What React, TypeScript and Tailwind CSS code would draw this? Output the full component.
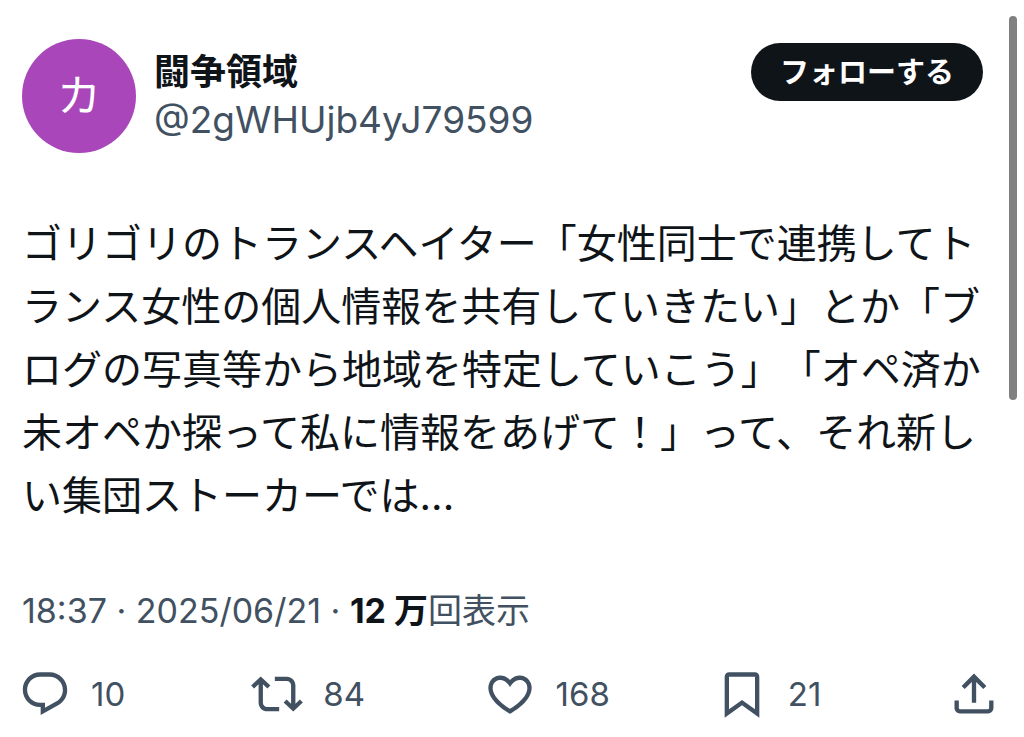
import React from 'react';

interface IconProps {
  path: string;
}

interface Stat {
  id: string;
  label: string;
  count?: string;
  path: string;
}

const author = {
  name: '闘争領域',
  handle: '@2gWHUjb4yJ79599',
  initial: 'カ'
};

const body =
  'ゴリゴリのトランスヘイター「女性同士で連携してトランス女性の個人情報を共有していきたい」とか「ブログの写真等から地域を特定していこう」「オペ済か未オペか探って私に情報をあげて！」って、それ新しい集団ストーカーでは...';

const stats: Stat[] = [
  {
    id: 'reply',
    label: '返信',
    count: '10',
    path: 'M1.751 10c0-4.42 3.584-8 8.005-8h4.366c4.49 0 8.129 3.64 8.129 8.13 0 2.96-1.607 5.68-4.196 7.11l-8.054 4.46v-3.69h-.067c-4.49.1-8.183-3.51-8.183-8.01zm8.005-6c-3.317 0-6.005 2.69-6.005 6 0 3.37 2.77 6.08 6.138 6.01l.351-.01h1.761v2.3l5.087-2.81c1.951-1.08 3.163-3.13 3.163-5.36 0-3.39-2.744-6.13-6.129-6.13H9.756z'
  },
  {
    id: 'repost',
    label: 'リポスト',
    count: '84',
    path: 'M4.5 3.88l4.432 4.14-1.364 1.46L5.5 7.55V16c0 1.1.896 2 2 2H13v2H7.5c-2.209 0-4-1.79-4-4V7.55L1.432 9.48.068 8.02 4.5 3.88zM16.5 6H11V4h5.5c2.209 0 4 1.79 4 4v8.45l2.068-1.93 1.364 1.46-4.432 4.14-4.432-4.14 1.364-1.46 2.068 1.93V8c0-1.1-.896-2-2-2z'
  },
  {
    id: 'like',
    label: 'いいね',
    count: '168',
    path: 'M16.697 5.5c-1.222-.06-2.679.51-3.89 2.16l-.805 1.09-.806-1.09C9.984 6.01 8.526 5.44 7.304 5.5c-1.243.07-2.349.78-2.91 1.91-.552 1.12-.633 2.78.479 4.82 1.074 1.97 3.257 4.27 7.129 6.61 3.87-2.34 6.052-4.64 7.126-6.61 1.111-2.04 1.03-3.7.477-4.82-.561-1.13-1.666-1.84-2.908-1.91zm4.187 7.69c-1.351 2.48-4.001 5.12-8.379 7.67l-.503.3-.504-.3c-4.379-2.55-7.029-5.19-8.382-7.67-1.36-2.5-1.41-4.86-.514-6.67.887-1.79 2.647-2.91 4.601-3.01 1.651-.09 3.368.56 4.798 2.01 1.429-1.45 3.146-2.1 4.796-2.01 1.954.1 3.714 1.22 4.601 3.01.896 1.81.846 4.17-.514 6.67z'
  },
  {
    id: 'bookmark',
    label: 'ブックマーク',
    count: '21',
    path: 'M4 4C4 2.9 4.9 2 6 2h12c1.1 0 2 .9 2 2v18.94l-8-5.71-8 5.71V4zM6 4v15.06l6-4.29 6 4.29V4H6z'
  },
  {
    id: 'share',
    label: '共有',
    path: 'M12 2.59l5.7 5.7-1.41 1.42L13 6.41V16h-2V6.41l-3.3 3.3-1.41-1.42L12 2.59zM21 15l-.02 3.51c0 1.38-1.12 2.49-2.5 2.49H5.5C4.11 21 3 19.88 3 18.5V15h2v3.5c0 .28.22.5.5.5h12.98c.28 0 .5-.22.5-.5L19 15h2z'
  }
];

const Icon: React.FC<IconProps> = ({ path }) => (
  <svg viewBox="0 0 24 24" className="size-[52px] shrink-0 fill-current" aria-hidden="true">
    <path d={path} />
  </svg>
);

const PostHeader: React.FC = () => (
  <header className="flex items-start justify-between">
    <div className="flex items-center gap-[18px]">
      <div className="flex size-[114px] items-center justify-center rounded-full bg-[#a846ba] text-[44px] leading-none text-white">
        {author.initial}
      </div>
      <div>
        <h1 className="text-[36px] leading-12 font-bold">{author.name}</h1>
        <p className="text-[37px] leading-12 text-[#415161]">{author.handle}</p>
      </div>
    </div>
    <button className="mt-1 h-[58px] rounded-full bg-[#0f1419] px-[29px] text-[29px] leading-none font-bold text-white">
      フォローする
    </button>
  </header>
);

const App: React.FC = () => {
  return (
    <main
      lang="ja"
      className="relative bg-white pt-[39px] pb-3 font-['Inter','Noto_Sans_CJK_JP',sans-serif] text-[#0f1419]"
    >
      <article>
        <div className="pr-[41px] pl-[22px]">
          <PostHeader />
          <p className="mt-[59px] text-[40px] leading-[63px] [text-spacing-trim:space-all]">{body}</p>
          <p className="mt-[60px] text-[34px] leading-12 text-[#415161]">
            18:37 · 2025/06/21 · <strong className="font-bold text-[#0f1419]">12 万</strong>回表示
          </p>
        </div>

        {/* Actions */}
        <div className="mt-[33px] flex pr-6 pl-[19px] text-[#415161]">
          {stats.map((stat) => (
            <div key={stat.id} className={stat.count ? 'flex-1' : ''}>
              <button aria-label={stat.label} className="flex items-center gap-5 text-[33px] leading-none">
                <Icon path={stat.path} />
                {stat.count && <span>{stat.count}</span>}
              </button>
            </div>
          ))}
        </div>
      </article>

      {/* Scroll thumb */}
      <div className="absolute top-4 right-[7px] h-96 w-2 rounded-full bg-[#808080]" />
    </main>
  );
};

export default App;
